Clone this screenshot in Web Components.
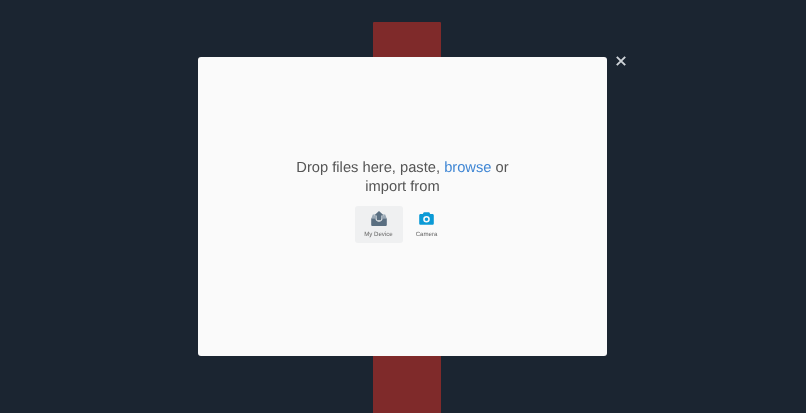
<!DOCTYPE html>
<html>
<head>
<meta charset="utf-8">
<title>Upload</title>
<style>
  html, body { margin: 0; height: 100%; background: #1b2531; overflow: hidden; }
  a { color: #3f86d4; }
</style>
</head>
<body>
<upload-page>
  <upload-modal>
    <drop-prompt>
      <span>Drop files here, paste, <a>browse</a> or</span>
      <span>import from</span>
    </drop-prompt>
    <source-list>
      <source-tile active label="My Device">
        <svg width="16" height="15" viewBox="0 0 16 15">
          <path d="M1.8 3.6 H14.2 L15.8 7.8 H0.2 Z" fill="#9aa9b6"/>
          <path d="M0.2 7.6 H4.4 C4.6 9.6 6 10.8 8 10.8 C10 10.8 11.4 9.6 11.6 7.6 H15.8 V14 C15.8 14.5 15.4 14.9 14.9 14.9 H1.1 C0.6 14.9 0.2 14.5 0.2 14 Z" fill="#5a6f81"/>
          <path d="M8 0 L12.8 4.6 H10.2 V9.2 H5.8 V4.6 H3.2 Z" fill="#5a6f81" stroke="#eff0f1" stroke-width="0.7" paint-order="stroke"/>
        </svg>
      </source-tile>
      <source-tile label="Camera">
        <svg width="15" height="13" viewBox="0 0 15 13">
          <path fill-rule="evenodd" d="M4.8 0.3 H10.2 L11.2 2 H13.4 C14.2 2 14.8 2.6 14.8 3.4 V11.4 C14.8 12.2 14.2 12.8 13.4 12.8 H1.6 C0.8 12.8 0.2 12.2 0.2 11.4 V3.4 C0.2 2.6 0.8 2 1.6 2 H3.8 Z M7.5 4 A3.3 3.3 0 1 0 7.5 10.6 A3.3 3.3 0 1 0 7.5 4 Z M7.5 5.5 A1.8 1.8 0 1 1 7.5 9.1 A1.8 1.8 0 1 1 7.5 5.5 Z" fill="#0b9ad6"/>
        </svg>
      </source-tile>
    </source-list>
  </upload-modal>
</upload-page>
<script>
class UploadPage extends HTMLElement {
  constructor() {
    super();
    this.attachShadow({mode: 'open'}).innerHTML = `
      <style>
        :host { display: block; position: relative; height: 413px; overflow: hidden; font-family: "Liberation Sans", Arial, sans-serif; text-rendering: geometricPrecision; filter: blur(0.35px); }
        .content { display: flex; justify-content: center; padding-top: 22px; height: 100%; box-sizing: border-box; padding-left: 8px; }
        .block { width: 68px; height: 100%; background: #7f2a2a; border-radius: 1px 1px 0 0; }
        .overlay { position: absolute; inset: 0; display: flex; justify-content: center; align-items: flex-start; padding-top: 57px; padding-right: 1px; }
        .close { position: absolute; left: 615px; top: 55px; width: 12px; height: 12px; padding: 0; border: 0; background: none; }
        .close svg { display: block; }
      </style>
      <div class="content"><div class="block"></div></div>
      <div class="overlay"><slot></slot></div>
      <button class="close" aria-label="Close">
        <svg width="12" height="12" viewBox="0 0 12 12"><path d="M1.8 1.8 L10.2 10.2 M10.2 1.8 L1.8 10.2" stroke="#cfd4d9" stroke-width="1.9" fill="none"/></svg>
      </button>
    `;
  }
}
customElements.define('upload-page', UploadPage);

class UploadModal extends HTMLElement {
  constructor() {
    super();
    this.attachShadow({mode: 'open'}).innerHTML = `
      <style>
        :host { display: flex; flex-direction: column; align-items: center; justify-content: flex-start; box-sizing: border-box; width: 409px; height: 299px; padding-top: 102px; background: #fafafa; border-radius: 3px; }
      </style>
      <slot></slot>
    `;
  }
}
customElements.define('upload-modal', UploadModal);

class DropPrompt extends HTMLElement {
  constructor() {
    super();
    this.attachShadow({mode: 'open'}).innerHTML = `
      <style>
        :host { display: flex; flex-direction: column; width: 224px; font-size: 14.7px; line-height: 19px; color: #555; text-align: center; }
        ::slotted(span) { display: block; white-space: nowrap; }
      </style>
      <slot></slot>
    `;
  }
}
customElements.define('drop-prompt', DropPrompt);

class SourceList extends HTMLElement {
  constructor() {
    super();
    this.attachShadow({mode: 'open'}).innerHTML = `
      <style>
        :host { display: flex; margin-top: 9px; }
      </style>
      <slot></slot>
    `;
  }
}
customElements.define('source-list', SourceList);

class SourceTile extends HTMLElement {
  constructor() {
    super();
    this.attachShadow({mode: 'open'}).innerHTML = `
      <style>
        :host { display: flex; flex-direction: column; align-items: center; box-sizing: border-box; width: 48px; height: 37px; padding-top: 5px; border-radius: 3px; }
        :host([active]) { background: #eff0f1; }
        .icon { display: flex; align-items: center; justify-content: center; height: 15px; }
        .label { margin-top: 5px; font-size: 6.1px; line-height: 8px; color: #666; white-space: nowrap; }
      </style>
      <div class="icon"><slot></slot></div>
      <div class="label"></div>
    `;
    this.shadowRoot.querySelector('.label').textContent = this.getAttribute('label');
  }
}
customElements.define('source-tile', SourceTile);
</script>
</body>
</html>
